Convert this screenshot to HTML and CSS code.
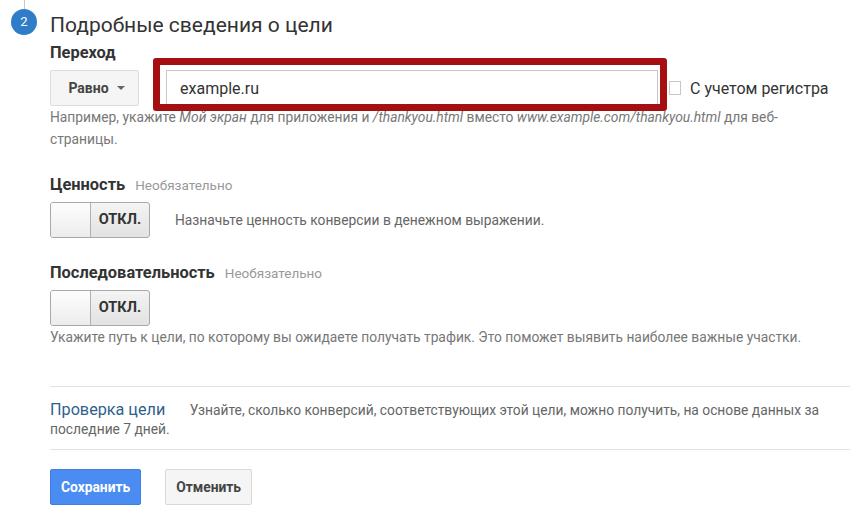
FILE: index.html
```html
<!DOCTYPE html>
<html>
  <head>
    <title>Подробные сведения о цели</title>
    <link rel="stylesheet" href="styles.css">
  </head>
  <body>
    <div class="step">
      <div class="step-rail">
        <div class="rail-line"></div>
        <div class="step-num">2</div>
      </div>
      <div class="step-body">
        <h1>Подробные сведения о цели</h1>

        <div class="field-label">Переход</div>
        <div class="dest-row">
          <button class="select-btn">Равно <span class="caret"></span></button>
          <div class="dest-wrap">
            <input type="text" class="dest-input" value="example.ru">
            <div class="highlight"></div>
          </div>
          <span class="checkbox"></span>
          <label class="check-label">С учетом регистра</label>
        </div>
        <p class="hint">Например, укажите <i>Мой экран</i> для приложения и <i>/thankyou.html</i> вместо <i>www.example.com/thankyou.html</i> для веб-страницы.</p>

        <div class="field-label section">Ценность <span class="optional">Необязательно</span></div>
        <div class="toggle-row">
          <div class="toggle">
            <span class="knob"></span>
            <span class="state">ОТКЛ.</span>
          </div>
          <span class="toggle-note">Назначьте ценность конверсии в денежном выражении.</span>
        </div>

        <div class="field-label section">Последовательность <span class="optional">Необязательно</span></div>
        <div class="toggle-row">
          <div class="toggle">
            <span class="knob"></span>
            <span class="state">ОТКЛ.</span>
          </div>
        </div>
        <p class="hint">Укажите путь к цели, по которому вы ожидаете получать трафик. Это поможет выявить наиболее важные участки.</p>

        <div class="verify">
          <a class="verify-link">Проверка цели</a>
          <span class="verify-text">Узнайте, сколько конверсий, соответствующих этой цели, можно получить, на основе данных за последние 7 дней.</span>
        </div>

        <div class="actions">
          <button class="btn btn-primary">Сохранить</button>
          <button class="btn">Отменить</button>
        </div>
      </div>
    </div>
  </body>
</html>
```

FILE: styles.css
```css
body {
  margin: 0;
  padding: 0;
  background-color: #fff;
  font-family: Roboto, "Liberation Sans", Arial, sans-serif;
  color: #333;
}
.step {
  display: flex;
}
.step-rail {
  width: 50px;
  display: flex;
  flex-direction: column;
  align-items: center;
  flex-shrink: 0;
}
.rail-line {
  width: 1px;
  height: 9px;
  background-color: #c8c8c8;
  margin-left: -2px;
}
.step-num {
  width: 26px;
  height: 26px;
  border-radius: 50%;
  background-color: #2f7dc9;
  color: #fff;
  font-size: 13px;
  line-height: 26px;
  text-align: center;
  margin-left: -2px;
}
.step-body {
  width: 800px;
}
h1 {
  font-size: 21px;
  font-weight: normal;
  line-height: 26px;
  margin: 12px 0 0 0;
  color: #333;
}
.field-label {
  font-size: 16.4px;
  font-weight: bold;
  line-height: 20px;
  margin-top: 5px;
  color: #333;
}
.field-label.section {
  margin-top: 25px;
}
.optional {
  font-size: 13.5px;
  font-weight: normal;
  color: #999;
  margin-left: 6px;
}
.dest-row {
  display: flex;
  align-items: center;
  margin-top: 7px;
}
.select-btn {
  width: 89px;
  height: 36px;
  background-color: #f5f5f5;
  border: 1px solid #dcdcdc;
  border-radius: 2px;
  font-family: inherit;
  font-size: 14px;
  font-weight: bold;
  color: #444;
  padding: 0 0 0 4px;
  display: flex;
  align-items: center;
  justify-content: center;
  gap: 8px;
}
.caret {
  width: 0;
  height: 0;
  border-left: 4px solid transparent;
  border-right: 4px solid transparent;
  border-top: 4px solid #666;
}
.dest-wrap {
  position: relative;
  margin-left: 27px;
  width: 492px;
}
.dest-input {
  display: block;
  box-sizing: border-box;
  width: 100%;
  height: 36px;
  border: 1px solid #c8c8c8;
  padding: 0 13px;
  font-family: inherit;
  font-size: 16px;
  color: #333;
  outline: none;
}
/* red annotation frame drawn over the input */
.highlight {
  position: absolute;
  left: -13px;
  top: -12px;
  right: -9px;
  bottom: -5px;
  border: 7px solid #a50f12;
  border-radius: 3px;
}
.checkbox {
  width: 12px;
  height: 14px;
  border: 1px solid #c6c6c6;
  margin-left: 11px;
  box-sizing: border-box;
}
.check-label {
  font-size: 16px;
  color: #333;
  margin-left: 9px;
}
.hint {
  max-width: 760px;
  font-size: 13.8px;
  line-height: 22px;
  color: #777;
  margin: 0;
}
.toggle-row {
  display: flex;
  align-items: center;
  margin-top: 7px;
}
.toggle {
  display: flex;
  width: 100px;
  height: 36px;
  box-sizing: border-box;
  border: 1px solid #a8a8a8;
  border-radius: 3px;
  overflow: hidden;
  background: linear-gradient(#f4f4f4, #e2e2e2);
}
.knob {
  width: 39px;
  background: linear-gradient(#fdfdfd, #ececec);
  border-right: 1px solid #b0b0b0;
}
.state {
  flex: 1;
  text-align: center;
  line-height: 34px;
  font-size: 14.5px;
  font-weight: bold;
  color: #333;
}
.toggle-note {
  margin-left: 25px;
  font-size: 13.8px;
  color: #666;
}
.verify {
  margin-top: 38px;
  border-top: 1px solid #e2e2e2;
  border-bottom: 1px solid #e2e2e2;
  padding: 13px 0 10px 0;
  font-size: 13.8px;
  line-height: 19px;
  color: #666;
}
.verify-link {
  font-size: 16.2px;
  color: #2f5f8c;
  margin-right: 21px;
}
.actions {
  display: flex;
  gap: 24px;
  margin-top: 19px;
}
.btn {
  height: 36px;
  padding: 0 10px;
  background-color: #f5f5f5;
  border: 1px solid #d8d8d8;
  border-radius: 2px;
  font-family: inherit;
  font-size: 13.8px;
  font-weight: bold;
  color: #444;
}
.btn-primary {
  background-color: #4a8cf1;
  border-color: #3f7fe0;
  color: #fff;
}
```
